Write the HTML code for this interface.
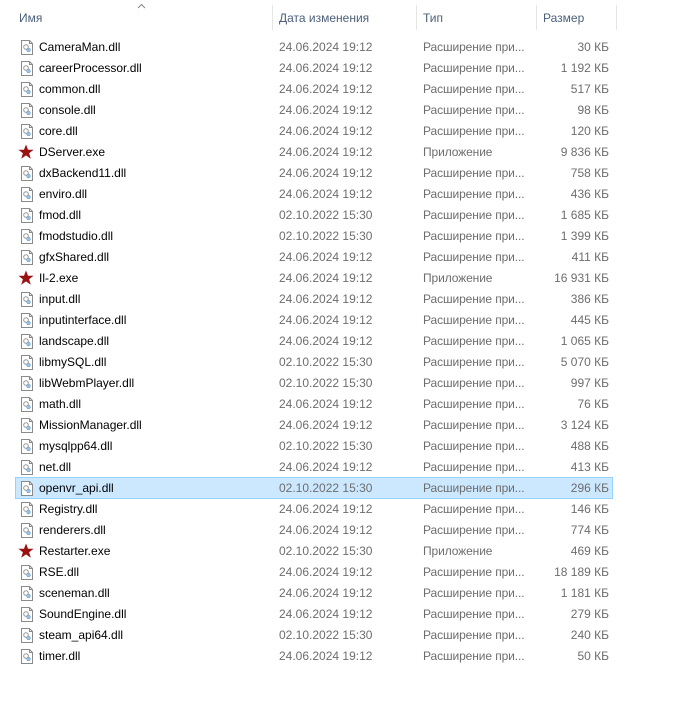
<!DOCTYPE html>
<html><head><meta charset="utf-8"><style>
body{margin:0;width:673px;height:718px;background:#fff;font-family:"Liberation Sans",sans-serif;font-size:12px;position:relative;overflow:hidden}
.h{position:absolute;top:11px;color:#4c607a;font-size:12px}
.sep{position:absolute;top:5px;height:25px;width:1px;background:#e5e5e5}
.r{position:absolute;left:0;width:673px;height:21px;line-height:21px}
.r span{position:absolute;top:0}
.n{left:39px;color:#000}
.d{left:279px;color:#6d6d6d}
.t{left:423px;color:#6d6d6d;letter-spacing:-0.1px}
.s{right:64px;color:#6d6d6d;text-align:right}
.sel{background:#cce8ff;box-shadow:inset 0 0 0 1px #99d1ff;left:15px;width:598px}
.ic{position:absolute;left:21px;top:3px;width:12px;height:15px}
</style></head><body>
<div style="position:absolute;left:137px;top:1px;color:#6d6d6d;font-size:10px">
<svg width="9" height="6"><path d="M1 5 L4.5 1.5 L8 5" stroke="#888" fill="none"/></svg></div>
<span class="h" style="left:19px">Имя</span>
<div class="sep" style="left:272px"></div>
<span class="h" style="left:279px">Дата изменения</span>
<div class="sep" style="left:416px"></div>
<span class="h" style="left:423px">Тип</span>
<div class="sep" style="left:536px"></div>
<span class="h" style="left:543px">Размер</span>
<div class="sep" style="left:616px"></div>
<div id="rows"></div>
<script>
const D="<svg class='ic' viewBox='0 0 12 15'><path d='M0.5 0.5H8.5L11.5 3.5V14.5H0.5Z' fill='#fff' stroke='#8a8a8a'/><path d='M8.5 0.5V3.5H11.5' fill='none' stroke='#8a8a8a'/><circle cx='5' cy='7' r='2.3' fill='none' stroke='#999'/><circle cx='7.5' cy='10' r='1.8' fill='#9cc3e6' stroke='#6a9cc8' stroke-width='.6'/></svg>";
const E="<svg class='ic' style='left:18px;top:2px;width:16px;height:16px' viewBox='0 0 16 16'><path d='M8 0.5L10 5.8H15.6L11.1 9.2L12.8 14.8L8 11.4L3.2 14.8L4.9 9.2L0.4 5.8H6Z' fill='#9a1111'/></svg>";
const a="24.06.2024 19:12",b="02.10.2022 15:30",x="Расширение при...",p="Приложение";
const R=[["CameraMan.dll",a,x,"30 КБ"],["careerProcessor.dll",a,x,"1 192 КБ"],["common.dll",a,x,"517 КБ"],["console.dll",a,x,"98 КБ"],["core.dll",a,x,"120 КБ"],["DServer.exe",a,p,"9 836 КБ",1],["dxBackend11.dll",a,x,"758 КБ"],["enviro.dll",a,x,"436 КБ"],["fmod.dll",b,x,"1 685 КБ"],["fmodstudio.dll",b,x,"1 399 КБ"],["gfxShared.dll",a,x,"411 КБ"],["Il-2.exe",a,p,"16 931 КБ",1],["input.dll",a,x,"386 КБ"],["inputinterface.dll",a,x,"445 КБ"],["landscape.dll",a,x,"1 065 КБ"],["libmySQL.dll",b,x,"5 070 КБ"],["libWebmPlayer.dll",b,x,"997 КБ"],["math.dll",a,x,"76 КБ"],["MissionManager.dll",a,x,"3 124 КБ"],["mysqlpp64.dll",b,x,"488 КБ"],["net.dll",a,x,"413 КБ"],["openvr_api.dll",b,x,"296 КБ"],["Registry.dll",a,x,"146 КБ"],["renderers.dll",a,x,"774 КБ"],["Restarter.exe",b,p,"469 КБ",1],["RSE.dll",a,x,"18 189 КБ"],["sceneman.dll",a,x,"1 181 КБ"],["SoundEngine.dll",a,x,"279 КБ"],["steam_api64.dll",b,x,"240 КБ"],["timer.dll",a,x,"50 КБ"]];
let h="";
R.forEach((r,i)=>{const top=37+21*i;
if(r[0]=="openvr_api.dll")h+=`<div class='r sel' style='top:${top-1}px;height:22px'></div>`;
h+=`<div class='r' style='top:${top}px'>${r[4]?E:D}<span class='n'>${r[0]}</span><span class='d'>${r[1]}</span><span class='t'>${r[2]}</span><span class='s'>${r[3]}</span></div>`;});
document.getElementById("rows").innerHTML=h;
</script>
</body></html>
